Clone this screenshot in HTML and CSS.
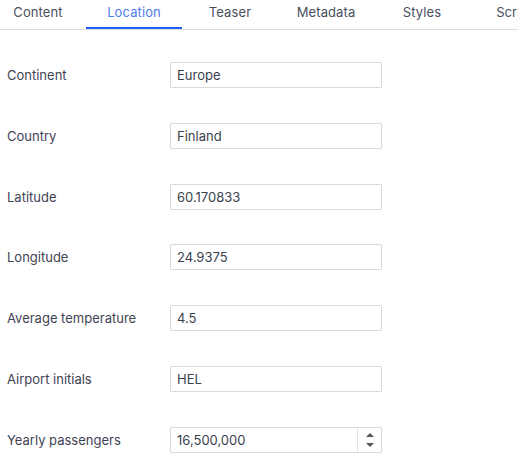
FILE: index.html
```html
<!DOCTYPE html>
<html>
<head>
<meta charset="utf-8">
<link rel="stylesheet" href="styles.css">
</head>
<body>
<div class="tabs">
  <div class="tab">Content</div>
  <div class="tab active">Location</div>
  <div class="tab">Teaser</div>
  <div class="tab">Metadata</div>
  <div class="tab">Styles</div>
  <div class="tab">Scripts</div>
</div>
<div class="form">
  <div class="row"><label class="label">Continent</label><div class="field">Europe</div></div>
  <div class="row"><label class="label">Country</label><div class="field">Finland</div></div>
  <div class="row"><label class="label">Latitude</label><div class="field">60.170833</div></div>
  <div class="row"><label class="label">Longitude</label><div class="field">24.9375</div></div>
  <div class="row"><label class="label">Average temperature</label><div class="field">4.5</div></div>
  <div class="row"><label class="label">Airport initials</label><div class="field">HEL</div></div>
  <div class="row"><label class="label">Yearly passengers</label>
    <div class="field number"><span class="value">16,500,000</span>
      <span class="spin"><span class="up"></span><span class="down"></span></span>
    </div>
  </div>
</div>
</body>
</html>
```
FILE: styles.css
```css
* { box-sizing: border-box; }
html, body { margin: 0; padding: 0; background: #fff; overflow: hidden; }
body {
  font-family: Inter, "Noto Sans", sans-serif;
  font-size: 13px;
  color: #3d4252;
  width: 518px;
  height: 475px;
}
.tabs {
  display: flex;
  height: 30px;
  border-bottom: 1px solid #dedede;
  overflow: hidden;
}
.tabs .tab:first-child { margin-left: -10px; }
.tab {
  flex: 0 0 96px;
  height: 29px;
  text-align: center;
  line-height: 24px;
  color: #4a4f5e;
  letter-spacing: 0.1px;
}
.tab.active {
  color: #4d7cf2;
  border-bottom: 2px solid #1f5ef8;
}
.form {
  display: flex;
  flex-direction: column;
  gap: 34.8px;
  padding: 32px 0 0 7px;
}
.row {
  display: flex;
  align-items: center;
  height: 26px;
}
.label {
  width: 163px;
  color: #3f4454;
}
.field {
  width: 212px;
  height: 26px;
  border: 1px solid #d9d9d9;
  border-radius: 1px;
  padding: 0 6px;
  line-height: 24px;
  color: #3a3f4e;
}
.number {
  display: flex;
  padding-right: 0;
}
.number .value { flex: 1; }
.spin {
  width: 24px;
  border-left: 1px solid #e2e2e2;
  display: flex;
  flex-direction: column;
  align-items: center;
  justify-content: center;
  gap: 6px;
}
.up, .down {
  width: 0; height: 0;
  border-left: 4px solid transparent;
  border-right: 4px solid transparent;
}
.up { border-bottom: 4px solid #555; }
.down { border-top: 4px solid #555; }
```
